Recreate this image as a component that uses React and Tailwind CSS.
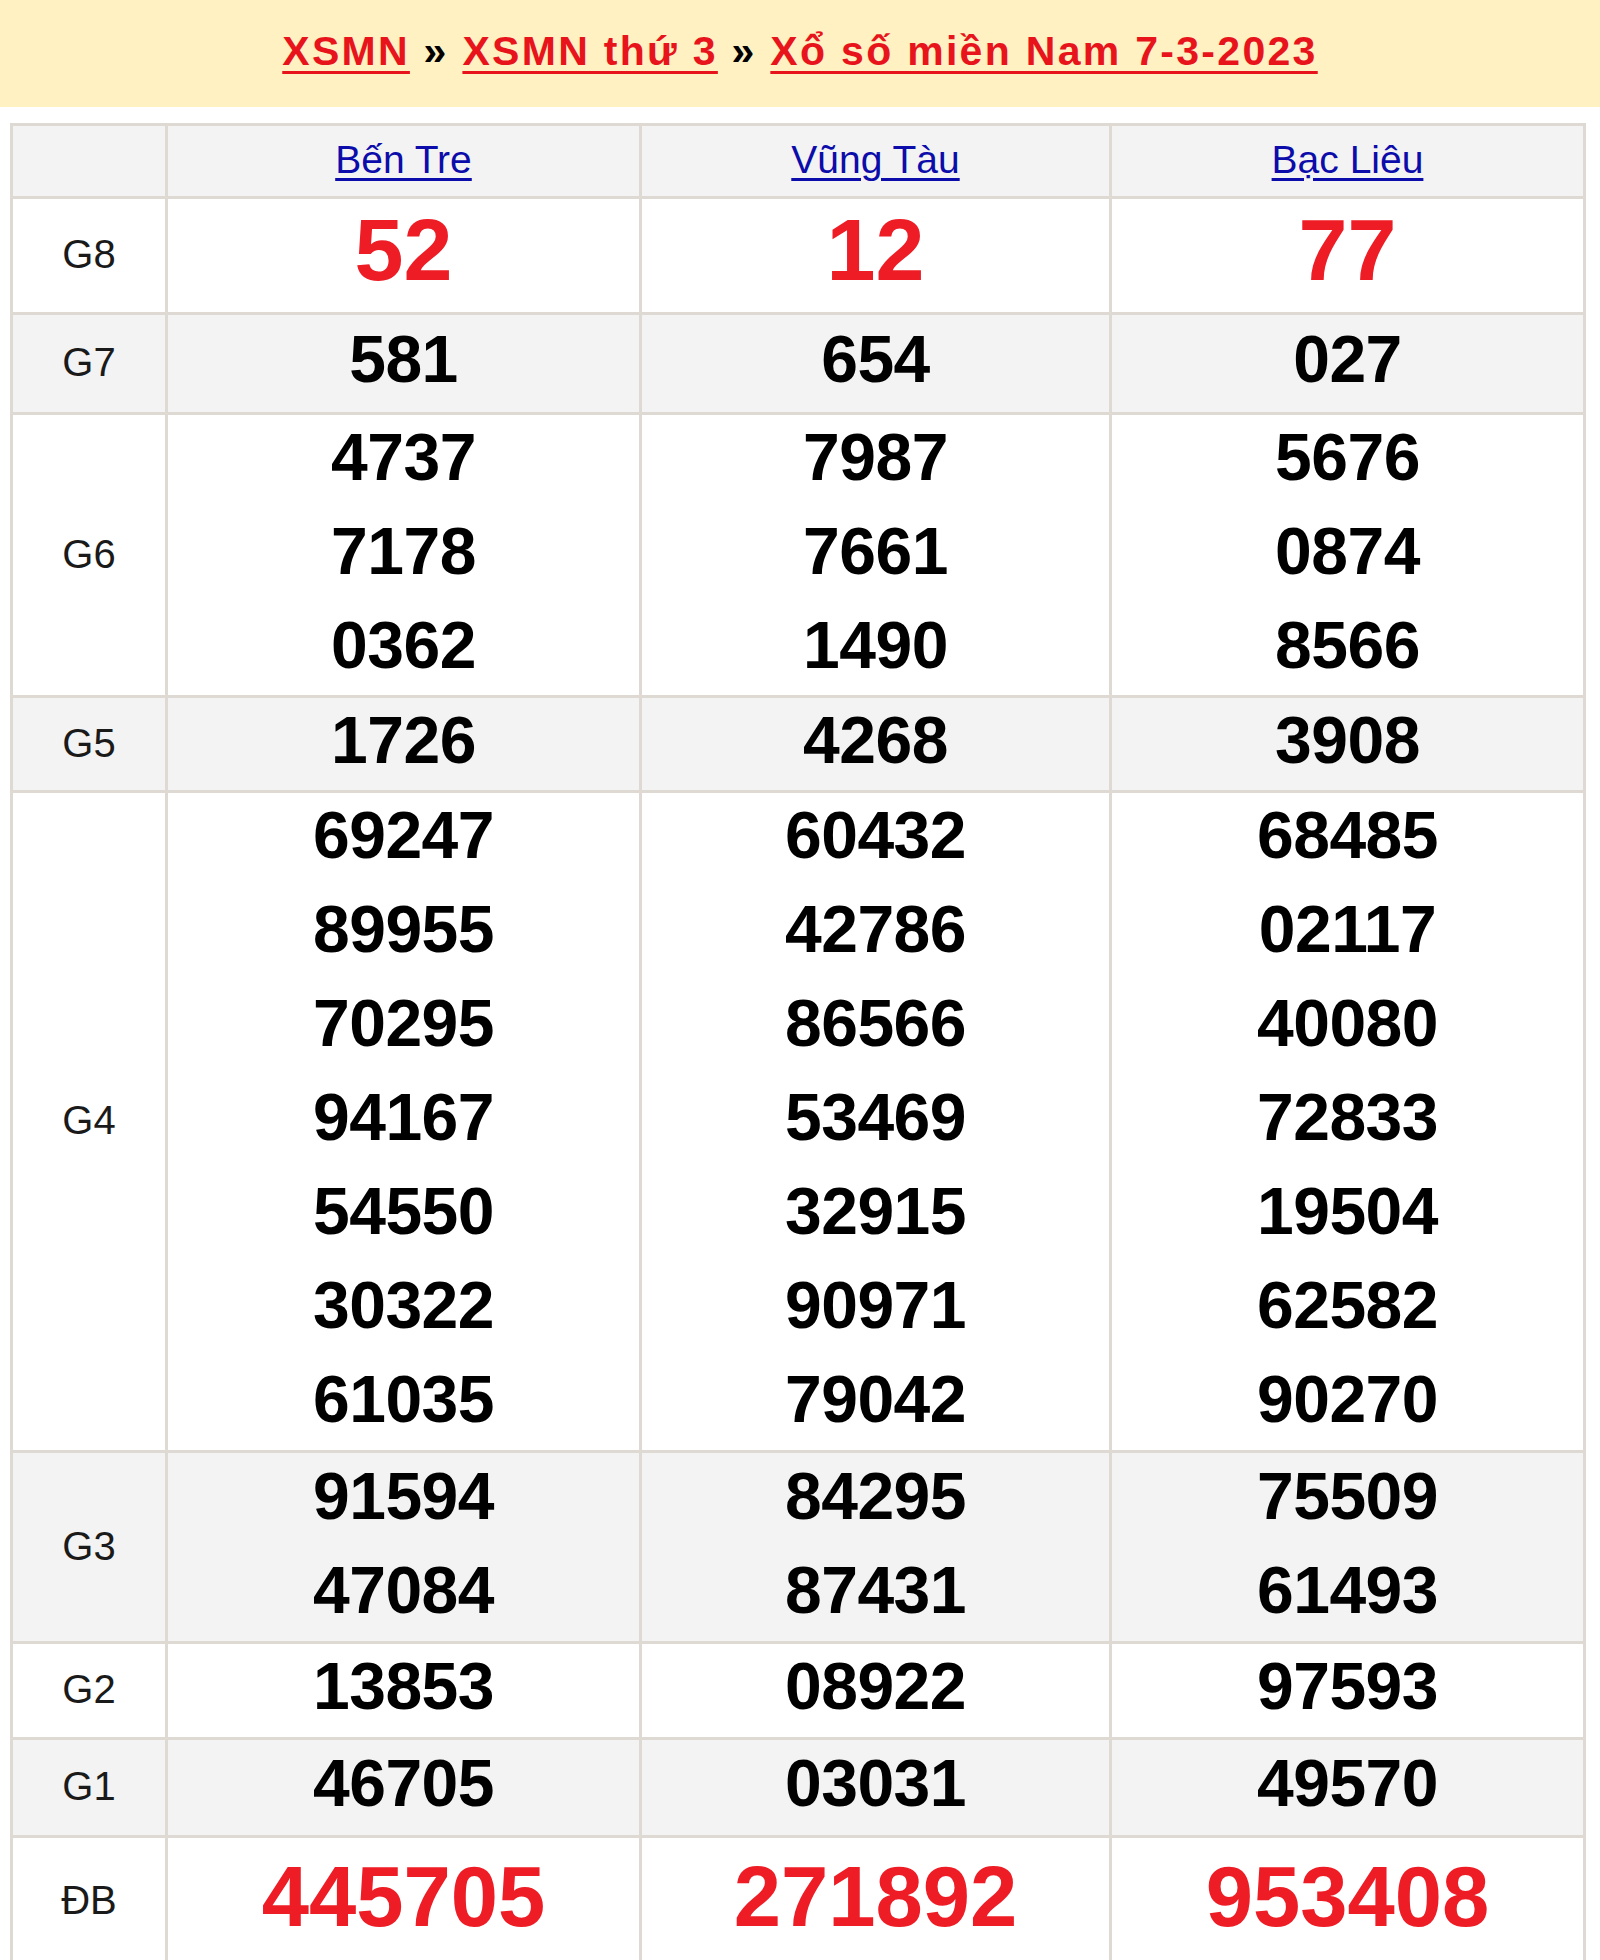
import React from "react";

const provinces = ["Bến Tre", "Vũng Tàu", "Bạc Liêu"];

const prizes = [
  { name: "G8", h: "h-[116px]", bg: "bg-white", big: "g8", nums: [["52"], ["12"], ["77"]] },
  { name: "G7", h: "h-[100px]", bg: "bg-[#f3f3f3]", nums: [["581"], ["654"], ["027"]] },
  {
    name: "G6",
    h: "h-[283px]",
    bg: "bg-white",
    nums: [
      ["4737", "7178", "0362"],
      ["7987", "7661", "1490"],
      ["5676", "0874", "8566"],
    ],
  },
  { name: "G5", h: "h-[95px]", bg: "bg-[#f3f3f3]", nums: [["1726"], ["4268"], ["3908"]] },
  {
    name: "G4",
    h: "h-[660px]",
    bg: "bg-white",
    nums: [
      ["69247", "89955", "70295", "94167", "54550", "30322", "61035"],
      ["60432", "42786", "86566", "53469", "32915", "90971", "79042"],
      ["68485", "02117", "40080", "72833", "19504", "62582", "90270"],
    ],
  },
  {
    name: "G3",
    h: "h-[191px]",
    bg: "bg-[#f3f3f3]",
    nums: [
      ["91594", "47084"],
      ["84295", "87431"],
      ["75509", "61493"],
    ],
  },
  { name: "G2", h: "h-[96px]", bg: "bg-white", nums: [["13853"], ["08922"], ["97593"]] },
  { name: "G1", h: "h-[98px]", bg: "bg-[#f3f3f3]", nums: [["46705"], ["03031"], ["49570"]] },
  { name: "ĐB", h: "h-[130px]", bg: "bg-white", big: "db", nums: [["445705"], ["271892"], ["953408"]] },
];

function NumberCell({ values, big }) {
  if (big === "g8") {
    return <div className="text-[88px] leading-[100px] font-bold text-[#ee1c25] pb-[12px]">{values[0]}</div>;
  }
  if (big === "db") {
    return <div className="text-[85px] leading-[100px] font-bold text-[#ee1c25] pb-[10px]">{values[0]}</div>;
  }
  return (
    <div className="flex flex-col pb-[9px]">
      {values.map((v) => (
        <div key={v} className="text-[66px] leading-[94px] font-bold text-black tracking-[-0.5px]">
          {v}
        </div>
      ))}
    </div>
  );
}

export default function App() {
  return (
    <div className="w-[1600px] bg-white font-['Liberation_Sans',Arial,sans-serif]">
      <div className="h-[107px] bg-[#fff1c2] flex items-center justify-center">
        <p className="text-[41px] font-bold tracking-[2.3px] text-black -mt-[3px]">
          <a href="#" className="text-[#e8141c] underline decoration-[3px] underline-offset-[6px]">XSMN</a>
          {" » "}
          <a href="#" className="text-[#e8141c] underline decoration-[3px] underline-offset-[6px]">XSMN thứ 3</a>
          {" » "}
          <a href="#" className="text-[#e8141c] underline decoration-[3px] underline-offset-[6px]">
            Xổ số miền Nam 7-3-2023
          </a>
        </p>
      </div>

      <div className="mt-[16px] ml-[10px] w-[1576px] border-t-[3px] border-l-[3px] border-[#dedad3] grid grid-cols-[155px_474px_470px_474px]">
        <div className="h-[73px] bg-[#f3f3f3] border-r-[3px] border-b-[3px] border-[#dedad3]"></div>
        {provinces.map((p) => (
          <div
            key={p}
            className="h-[73px] bg-[#f3f3f3] border-r-[3px] border-b-[3px] border-[#dedad3] flex items-center justify-center"
          >
            <a href="#" className="text-[39px] text-[#0c0caa] underline decoration-[3px] underline-offset-[5px] pb-[2px]">
              {p}
            </a>
          </div>
        ))}

        {prizes.map((row) => (
          <React.Fragment key={row.name}>
            <div
              className={`${row.h} ${row.bg} border-r-[3px] border-b-[3px] border-[#dedad3] flex items-center justify-center text-[40px] text-[#1a1a1a] pb-[3px]`}
            >
              {row.name}
            </div>
            {row.nums.map((vals, i) => (
              <div
                key={i}
                className={`${row.h} ${row.bg} border-r-[3px] border-b-[3px] border-[#dedad3] flex items-center justify-center text-center`}
              >
                <NumberCell values={vals} big={row.big} />
              </div>
            ))}
          </React.Fragment>
        ))}
      </div>
    </div>
  );
}
